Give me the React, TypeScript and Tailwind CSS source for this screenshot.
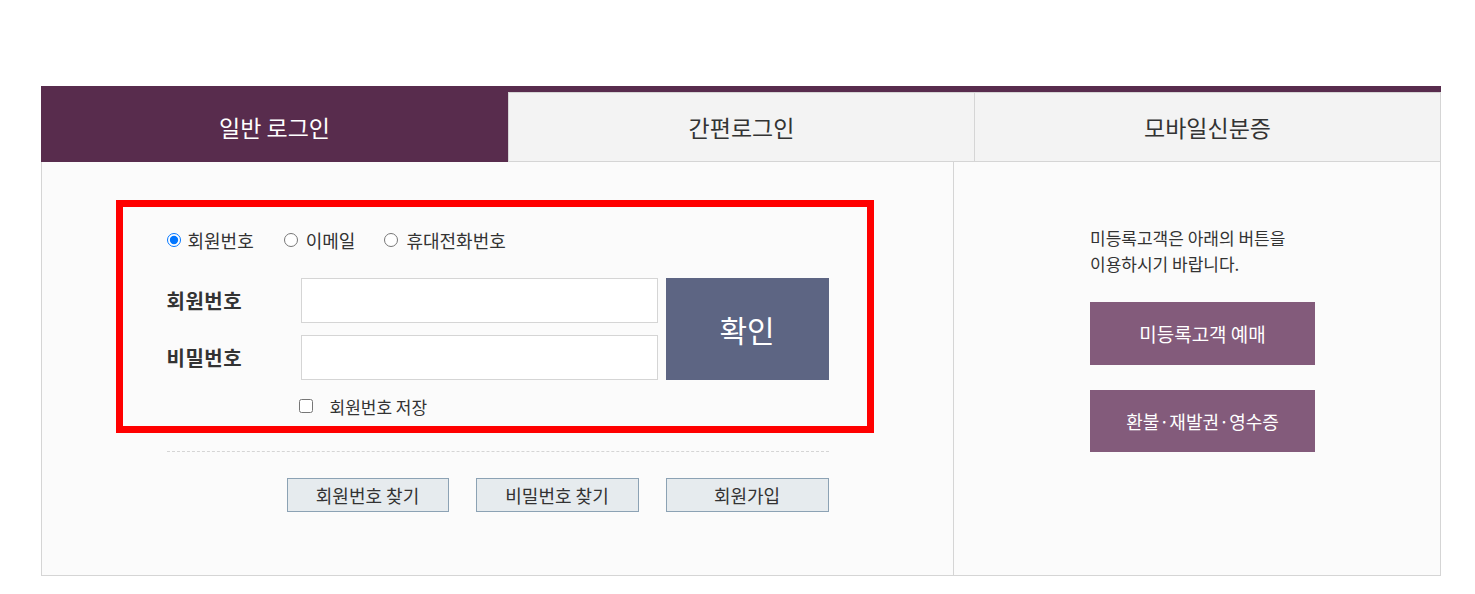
import React from "react";

export default function App() {
  const font = { fontFamily: '"Noto Sans CJK KR", "Noto Sans", sans-serif' };
  return (
    <div className="min-h-[594px] w-[1475px] bg-white pt-[86px] pl-[41px] text-[#333]" style={font}>
      <div className="w-[1400px]">
        {/* Tabs */}
        <div className="flex border-t-[6px] border-[#582c4d]">
          <div className="flex h-[70px] w-[467px] items-center justify-center bg-[#582c4d] text-[23px] leading-none text-white">
            일반 로그인
          </div>
          <div className="flex h-[70px] w-[466px] items-center justify-center border-t border-b border-l border-[#d5d5d5] bg-[#f3f3f3] text-[23px] leading-none text-[#333]">
            간편로그인
          </div>
          <div className="flex h-[70px] w-[467px] items-center justify-center border border-[#d5d5d5] bg-[#f3f3f3] text-[23px] leading-none text-[#333]">
            모바일신분증
          </div>
        </div>

        {/* Content */}
        <div className="flex border-x border-b border-[#d5d5d5] bg-[#fbfbfb]">
          {/* Left */}
          <div className="flex w-[912px] justify-center border-r border-[#d5d5d5] pt-[67px] pb-[63px]">
            <div className="relative w-[662px]">
              <div className="pointer-events-none absolute left-[-51px] top-[-29px] h-[233px] w-[758px] border-[7px] border-[#ff0000]" />
              {/* radios */}
              <div className="flex h-[22px] items-center text-[18px] leading-none">
                <label className="flex items-center">
                  <input type="radio" name="t" defaultChecked className="m-0 h-[14px] w-[14px]" />
                  <span className="ml-[7px]">회원번호</span>
                </label>
                <label className="ml-[30px] flex items-center">
                  <input type="radio" name="t" className="m-0 h-[14px] w-[14px]" />
                  <span className="ml-[8px]">이메일</span>
                </label>
                <label className="ml-[29px] flex items-center">
                  <input type="radio" name="t" className="m-0 h-[14px] w-[14px]" />
                  <span className="ml-[8px]">휴대전화번호</span>
                </label>
              </div>

              {/* inputs */}
              <div className="mt-[27px] flex">
                <div className="flex flex-col gap-[12px]">
                  <div className="flex h-[45px] items-center">
                    <div className="w-[134px] text-[20px] font-bold leading-none tracking-[0.5px] text-[#333]">회원번호</div>
                    <div className="h-[45px] w-[357px] border border-[#d5d5d5] bg-white" />
                  </div>
                  <div className="flex h-[45px] items-center">
                    <div className="w-[134px] text-[20px] font-bold leading-none tracking-[0.5px] text-[#333]">비밀번호</div>
                    <div className="h-[45px] w-[357px] border border-[#d5d5d5] bg-white" />
                  </div>
                </div>
                <div className="ml-[8px] flex h-[102px] w-[163px] items-center justify-center bg-[#5d6583] text-[30px] leading-none text-white">
                  확인
                </div>
              </div>

              {/* save */}
              <div className="mt-[16px] flex h-[20px] items-center pl-[132px] text-[17px] leading-none">
                <input type="checkbox" className="m-0 h-[14px] w-[14px]" />
                <span className="ml-[17px]">회원번호 저장</span>
              </div>

              {/* dashed */}
              <div className="mt-[35px] border-t border-dashed border-[#d5d5d5]" />

              {/* buttons */}
              <div className="mt-[26px] flex justify-end gap-[27px]">
                <div className="flex h-[34px] w-[162px] items-center justify-center border border-[#8ca2b4] bg-[#e6ebee] text-[18px] leading-none text-[#333]">
                  회원번호 찾기
                </div>
                <div className="flex h-[34px] w-[163px] items-center justify-center border border-[#8ca2b4] bg-[#e6ebee] text-[18px] leading-none text-[#333]">
                  비밀번호 찾기
                </div>
                <div className="flex h-[34px] w-[163px] items-center justify-center border border-[#8ca2b4] bg-[#e6ebee] text-[18px] leading-none text-[#333]">
                  회원가입
                </div>
              </div>
            </div>
          </div>

          {/* Right */}
          <div className="flex-1 pt-[63px] pl-[136px]">
            <p className="text-[17px] leading-[26px] text-[#333]">
              미등록고객은 아래의 버튼을
              <br />
              이용하시기 바랍니다.
            </p>
            <div className="mt-[25px] flex h-[63px] w-[225px] items-center justify-center bg-[#835b7b] text-[19px] leading-none text-white">
              미등록고객 예매
            </div>
            <div className="mt-[25px] flex h-[62px] w-[225px] items-center justify-center bg-[#835b7b] text-[18px] leading-none text-white">
              환불·재발권·영수증
            </div>
          </div>
        </div>
      </div>
    </div>
  );
}
